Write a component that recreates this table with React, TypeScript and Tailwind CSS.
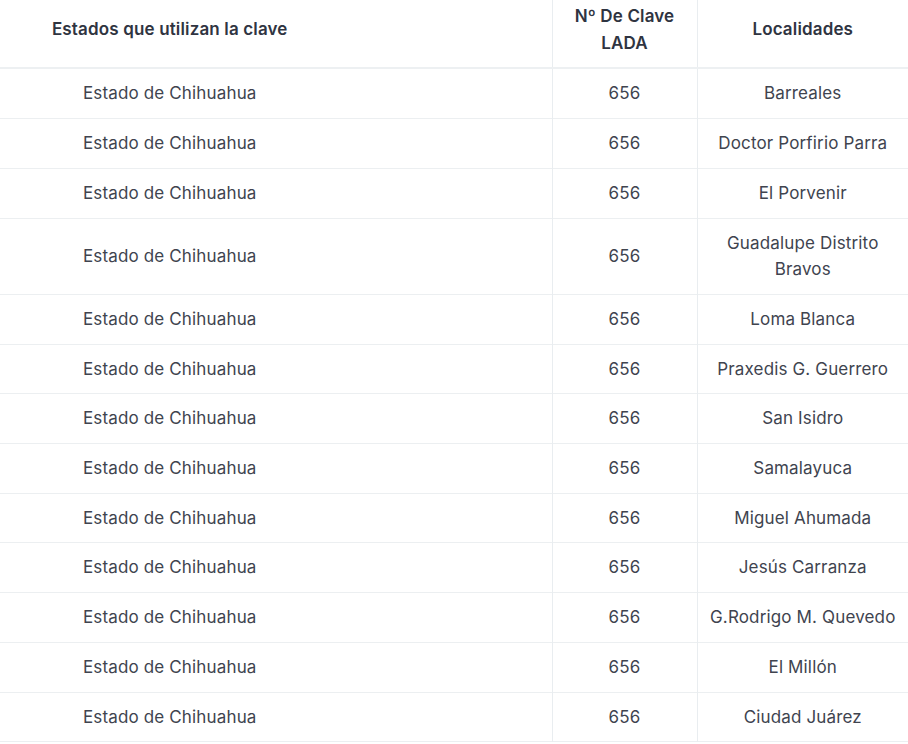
import React from "react";

const rows: string[][] = [
  ["Barreales"],
  ["Doctor Porfirio Parra"],
  ["El Porvenir"],
  ["Guadalupe Distrito", "Bravos"],
  ["Loma Blanca"],
  ["Praxedis G. Guerrero"],
  ["San Isidro"],
  ["Samalayuca"],
  ["Miguel Ahumada"],
  ["Jesús Carranza"],
  ["G.Rodrigo M. Quevedo"],
  ["El Millón"],
  ["Ciudad Juárez"],
];

export default function App() {
  return (
    <div
      className="w-[908px] h-[744px] overflow-hidden bg-white"
      style={{ fontFamily: "Inter, 'Noto Sans', sans-serif" }}
    >
      <table className="w-[908px] border-collapse table-fixed text-[17px] tracking-[0.15px] leading-[26.7px] text-[#40444f]">
        <colgroup>
          <col className="w-[552px]" />
          <col className="w-[145px]" />
          <col className="w-[211px]" />
        </colgroup>
        <thead>
          <tr className="border-b-2 border-[#edf0f2]">
            <th className="pt-[3px] pb-[11px] pr-[212px] text-center font-semibold text-[#2f3441] border-r border-[#e9edf0] align-middle">
              Estados que utilizan la clave
            </th>
            <th className="pt-[3px] pb-[11px] px-1 text-center font-semibold text-[#2f3441] border-r border-[#e9edf0]">
              Nº De Clave
              <br />
              LADA
            </th>
            <th className="pt-[3px] pb-[11px] px-2 text-center font-semibold text-[#2f3441]">
              Localidades
            </th>
          </tr>
        </thead>
        <tbody>
          {rows.map((loc, i) => (
            <tr key={i} className="border-b border-[#eceff1]">
              <td className="py-[11px] pr-[212px] text-center border-r border-[#e9edf0]">
                Estado de Chihuahua
              </td>
              <td className="py-[11px] text-center border-r border-[#e9edf0]">656</td>
              <td className="py-[11px] px-0 text-center whitespace-nowrap">
                {loc.map((l, j) => (
                  <React.Fragment key={j}>
                    {j > 0 && <br />}
                    {l}
                  </React.Fragment>
                ))}
              </td>
            </tr>
          ))}
        </tbody>
      </table>
    </div>
  );
}
